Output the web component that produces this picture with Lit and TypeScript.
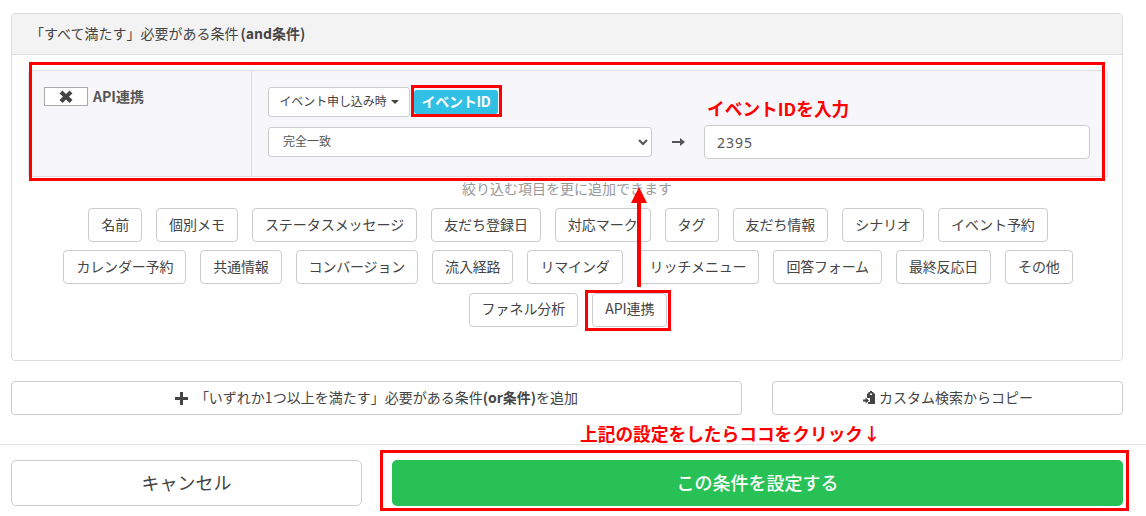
import { LitElement, html, css } from "lit";
import { customElement } from "lit/decorators.js";
import { classMap } from "lit/directives/class-map.js";

const ROWS = [
  "名前","個別メモ","ステータスメッセージ","友だち登録日","対応マーク","タグ","友だち情報","シナリオ","イベント予約",
  "カレンダー予約","共通情報","コンバージョン","流入経路","リマインダ","リッチメニュー","回答フォーム","最終反応日","その他",
  "ファネル分析","API連携",
];

@customElement("app-root")
export class AppRoot extends LitElement {
  static styles = css`
    :host {
      display: block; position: relative; width: 1146px; height: 516px; overflow: hidden; background: #fff;
      font-family: "Noto Sans CJK JP", "Noto Sans", sans-serif; color: #444; font-size: 14px;
    }
    * { box-sizing: border-box; }
    .main { padding: 13px 23px 0 11px; }
    .panel { height: 348px; border: 1px solid #ddd; border-radius: 4px; }
    .head { height: 41px; background: #f3f3f4; border-bottom: 1px solid #ddd; border-radius: 3px 3px 0 0;
      padding: 0 18px 2px; display: flex; align-items: center; font-size: 14px; line-height: 1; color: #444; }
    .head b { margin-left: 2px; font-weight: 700; }
    .rule { margin: 15px 14px 0 16px; height: 107px; display: flex; background: #f7f7fb;
      border: 1px solid #ddd; border-right-color: #e4e4e8; border-radius: 3px; }
    .rule-l { width: 225px; border-right: 1px solid #ddd; padding: 16px 0 0 15px; display: flex; align-items: flex-start; gap: 5px; }
    .x { width: 44px; height: 19px; border: 1px solid #aaa; background: #fff; display: flex; align-items: center; justify-content: center; }
    .rule-name { font-weight: 700; font-size: 14px; line-height: 19px; color: #555; }
    .rule-r { flex: 1; padding: 16px 17px 0 16px; }
    .line1 { display: flex; align-items: center; gap: 2px; height: 30px; }
    .dd { width: 142px; height: 30px; padding-bottom: 3px; border: 1px solid #ccc; border-radius: 3px; background: #fff; font-size: 12px; display: flex; align-items: center; justify-content: center; gap: 4px; color: #444; letter-spacing: -0.1px; }
    .caret { width: 0; height: 0; border: 4px solid transparent; border-top-color: #444; border-bottom: 0; margin-top: 3px; }
    .tag { margin-left: 2px; width: 84px; height: 24px; padding-bottom: 3px; border-radius: 3px; background: #31c0e4; color: #fff; font-weight: 700; font-size: 14px; display: flex; align-items: center; justify-content: center; letter-spacing: -0.3px; }
    .line2 { display: flex; align-items: center; margin-top: 8px; }
    select { width: 384px; height: 30px; border: 1px solid #ccc; border-radius: 3px; background: #fff; font: 12px "Noto Sans CJK JP", sans-serif; color: #555; padding: 0 0 3px 10px; }
    .arr { width: 52px; display: flex; justify-content: center; }
    input { width: 386px; height: 34px; border: 1px solid #ccc; border-radius: 4px; background: #fff; font: 14px "Noto Sans", sans-serif; letter-spacing: 1px; color: #555; padding: 0 12px; outline: none; }
    .hint { text-align: center; color: #999; font-size: 14px; line-height: 20px; margin-top: 1px; }
    .chips { margin: 10px 14px 0 16px; display: flex; flex-wrap: wrap; justify-content: center; gap: 8.4px 14px; }
    .chip { height: 34px; padding: 0 12px 3px; border: 1px solid #ccc; border-radius: 4px; background: #fff; display: flex; align-items: center; font-size: 14px; color: #444; white-space: nowrap; letter-spacing: -0.05px; }
    .chip.tight { letter-spacing: -0.17px; }
    .acts { display: flex; gap: 30px; margin-top: 20px; }
    .btn { height: 34px; padding-bottom: 3px; border: 1px solid #ccc; border-radius: 4px; background: #fff; display: flex; align-items: center; justify-content: center; font-size: 14px; color: #444; }
    .btn svg { margin-top: 3px; }
    .btn b { font-weight: 700; }
    .or { width: 731px; gap: 7px; }
    .copy { width: 351px; gap: 3px; }
    .foot { margin-top: 29px; border-top: 1px solid #e5e5e5; padding: 15px 23px 0 11px; display: flex; gap: 30px; }
    .big { height: 46px; padding-bottom: 3px; border-radius: 5px; display: flex; align-items: center; justify-content: center; font-size: 18px; }
    .cancel { width: 351px; border: 1px solid #ccc; background: #fff; color: #444; }
    .ok { width: 731px; background: #28c155; color: #fff; font-weight: 500; }
    .box { position: absolute; border: 3px solid #f00; pointer-events: none; }
    .note { position: absolute; color: #f00; font-weight: 700; font-size: 17.7px; line-height: 24px; white-space: nowrap; }
    .up { position: absolute; left: 630px; top: 186px; }
  `;

  render() {
    return html`
      <div class="main">
        <div class="panel">
          <div class="head">「すべて満たす」必要がある条件<b>(and条件)</b></div>
          <div class="rule">
            <div class="rule-l">
              <div class="x">
                <svg width="14" height="13" viewBox="0 0 14 13"><path d="M3.500.5 7 4l3.500-3.500L13.500 3.500 10 6.500l3.500 3.500-3 3L7 9.500 3.500 13l-3-3L4 6.500.5 3.500z" fill="#444"/></svg>
              </div>
              <span class="rule-name">API連携</span>
            </div>
            <div class="rule-r">
              <div class="line1">
                <div class="dd">イベント申し込み時<span class="caret"></span></div>
                <div class="tag">イベントID</div>
              </div>
              <div class="line2">
                <select><option>完全一致</option></select>
                <div class="arr">
                  <svg width="13" height="8" viewBox="0 0 13 8"><path d="M0 3h8V0l5 4-5 4V5H0z" fill="#555"/></svg>
                </div>
                <input value="2395" />
              </div>
            </div>
          </div>
          <div class="hint">絞り込む項目を更に追加できます</div>
          <div class="chips">${ROWS.map((r, i) => html`<div class=${classMap({ chip: true, tight: i >= 9 && i < 18 })}>${r}</div>`)}</div>
        </div>
        <div class="acts">
          <div class="btn or">
            <svg width="13" height="13" viewBox="0 0 13 13"><path d="M5 0h3v5h5v3H8v5H5V8H0V5h5z" fill="#444"/></svg>
            <span>「いずれか1つ以上を満たす」必要がある条件<b>(or条件)</b>を追加</span>
          </div>
          <div class="btn copy">
            <svg width="14" height="14" viewBox="0 0 14 14"><path d="M6.500 1h1.500V0h2v1h1.500v1.500H13V13H6v-2h2V7H5V2.500h1.500zM8 2.500v1.500h2V2.500zM1 8.500h2.500V6.500L7 9.500l-3.500 3V10.500H1z" fill="#444" fill-rule="evenodd"/></svg>
            <span>カスタム検索からコピー</span>
          </div>
        </div>
      </div>
      <div class="foot">
        <div class="big cancel">キャンセル</div>
        <div class="big ok">この条件を設定する</div>
      </div>

      <div class="box" style="left:29px;top:62px;width:1076px;height:119px"></div>
      <div class="box" style="left:411px;top:85px;width:91px;height:32px"></div>
      <div class="box" style="left:585px;top:290px;width:86px;height:41px"></div>
      <div class="box" style="left:380px;top:450px;width:749px;height:61px"></div>
      <svg class="up" width="18" height="102" viewBox="0 0 18 102"><path d="M9 1 17 17H11V101H7V17H1z" fill="#f00"/></svg>
      <div class="note" style="left:707px;top:96px">イベントIDを入力</div>
      <div class="note" style="left:580px;top:421px">上記の設定をしたらココをクリック↓</div>
    `;
  }
}
